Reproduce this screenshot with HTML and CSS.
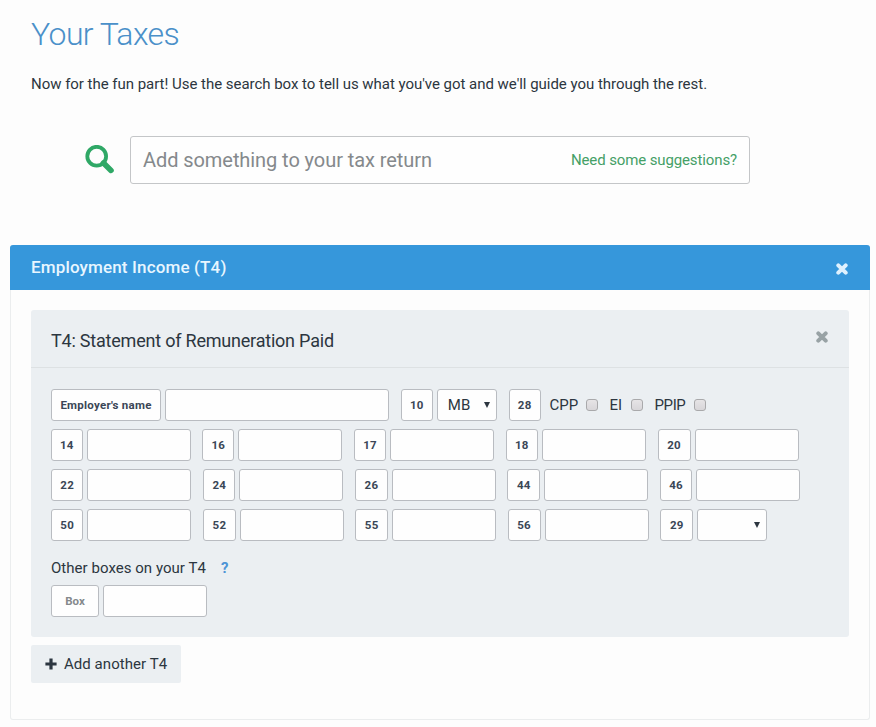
FILE: index.html
```
<!DOCTYPE html>
<html lang="en">
<head>
    <meta charset="UTF-8">
    <meta name="viewport" content="width=device-width, initial-scale=1.0">
    <title>Your Taxes</title>
    <link rel="stylesheet" href="styles.css">
</head>
<body>
    <header class="intro">
        <h1>Your Taxes</h1>
        <p>Now for the fun part! Use the search box to tell us what you've got and we'll guide you through the rest.</p>
    </header>

    <div class="search">
        <svg class="search-icon" viewBox="0 0 30 30" width="30" height="30">
            <circle cx="11.7" cy="11.2" r="9.4" fill="none" stroke="#2fa866" stroke-width="3.8"/>
            <path d="M18.5 18L26 25.4" fill="none" stroke="#2fa866" stroke-width="5.6" stroke-linecap="round"/>
        </svg>
        <div class="search-box">
            <input type="text" placeholder="Add something to your tax return">
            <a href="#">Need some suggestions?</a>
        </div>
    </div>

    <section class="panel">
        <div class="panel-header">
            <h2>Employment Income (T4)</h2>
            <button class="close" aria-label="Close">
                <svg viewBox="0 0 12 12" width="12" height="12"><path d="M2.3 2.3L9.7 9.7M9.7 2.3L2.3 9.7" stroke="currentColor" stroke-width="4" stroke-linecap="round"/></svg>
            </button>
        </div>
        <div class="panel-body">
            <div class="slip">
                <div class="slip-header">
                    <h3>T4: Statement of Remuneration Paid</h3>
                    <button class="close" aria-label="Remove">
                        <svg viewBox="0 0 12 12" width="12" height="12"><path d="M2.3 2.3L9.7 9.7M9.7 2.3L2.3 9.7" stroke="currentColor" stroke-width="4" stroke-linecap="round"/></svg>
                    </button>
                </div>
                <div class="slip-body">
                    <div class="row">
                        <div class="field"><label class="tag employer">Employer's name</label><input type="text" class="wide"></div>
                        <div class="field"><label class="tag">10</label><div class="select prov"><select><option>MB</option></select></div></div>
                        <div class="field"><label class="tag">28</label></div>
                        <div class="checks">
                            <label class="cpp">CPP <input type="checkbox"></label>
                            <label class="ei">EI <input type="checkbox"></label>
                            <label class="ppip">PPIP <input type="checkbox"></label>
                        </div>
                    </div>
                    <div class="row row-first">
                        <div class="field"><label class="tag">14</label><input type="text"></div>
                        <div class="field"><label class="tag">16</label><input type="text"></div>
                        <div class="field"><label class="tag">17</label><input type="text"></div>
                        <div class="field"><label class="tag">18</label><input type="text"></div>
                        <div class="field"><label class="tag">20</label><input type="text"></div>
                    </div>
                    <div class="row row-mid">
                        <div class="field"><label class="tag">22</label><input type="text"></div>
                        <div class="field"><label class="tag">24</label><input type="text"></div>
                        <div class="field"><label class="tag">26</label><input type="text"></div>
                        <div class="field"><label class="tag">44</label><input type="text"></div>
                        <div class="field"><label class="tag">46</label><input type="text"></div>
                    </div>
                    <div class="row row-last">
                        <div class="field"><label class="tag">50</label><input type="text"></div>
                        <div class="field"><label class="tag">52</label><input type="text"></div>
                        <div class="field"><label class="tag">55</label><input type="text"></div>
                        <div class="field"><label class="tag">56</label><input type="text"></div>
                        <div class="field"><label class="tag">29</label><div class="select code"><select><option></option></select></div></div>
                    </div>
                    <div class="other">Other boxes on your T4 <a href="#">?</a></div>
                    <div class="field"><input type="text" class="box-number" placeholder="Box"><input type="text"></div>
                </div>
            </div>
            <button class="add">
                <svg viewBox="0 0 12 12" width="12" height="12"><path d="M6 0.4V11.6M0.4 6H11.6" stroke="currentColor" stroke-width="3.2"/></svg>
                Add another T4
            </button>
        </div>
    </section>
</body>
</html>
```
FILE: styles.css
```
* {
    box-sizing: border-box;
}
body {
    margin: 0;
    background: #fdfdfd;
    color: #2c3640;
    font-family: Roboto, "Liberation Sans", sans-serif;
    font-size: 15px;
}
h1, h2, h3, p {
    margin: 0;
    font-weight: 400;
}
a {
    text-decoration: none;
}
button, input, select {
    font-family: inherit;
    color: inherit;
}
.intro {
    padding: 14px 31px 0;
}
.intro h1 {
    font-size: 32px;
    line-height: 40px;
    font-weight: 300;
    letter-spacing: -0.6px;
    color: #4a90c9;
}
.intro p {
    margin-top: 20px;
    line-height: 20px;
    letter-spacing: -0.03px;
}
.search {
    display: flex;
    align-items: center;
    gap: 15px;
    margin: 42px 0 0 85px;
}
.search-icon {
    display: block;
}
.search-box {
    display: flex;
    align-items: center;
    width: 620px;
    height: 48px;
    padding: 0 12px;
    background: #fefefe;
    border: 1px solid #c4c6c8;
    border-radius: 3px;
}
.search-box input {
    flex: 1;
    min-width: 0;
    border: none;
    padding: 0;
    background: none;
    font-size: 20px;
    letter-spacing: -0.07px;
}
.search-box input::placeholder {
    color: #85898c;
}
.search-box a {
    color: #45a067;
    letter-spacing: -0.12px;
}
.panel {
    width: 860px;
    height: 475px;
    margin: 61px 0 0 10px;
    border: 1px solid #ebedee;
    border-top: none;
    border-radius: 3px;
}
.panel-header {
    display: flex;
    align-items: center;
    justify-content: space-between;
    height: 45px;
    margin: 0 -1px;
    padding: 0 22px 0 21px;
    background: #3697db;
    color: #e8f6ff;
    border-radius: 3px 3px 0 0;
}
.panel-header h2 {
    margin-bottom: 2px;
    font-size: 17px;
    font-weight: 500;
    letter-spacing: 0.15px;
}
.close {
    display: block;
    padding: 0;
    border: none;
    background: none;
    color: #dff1fe;
    line-height: 0;
}
.panel-header .close {
    margin-top: 2px;
}
.panel-body {
    padding: 20px;
}
.slip {
    height: 327px;
    background: #ebeff2;
    border-radius: 3px;
}
.slip-header {
    display: flex;
    align-items: center;
    justify-content: space-between;
    height: 58px;
    padding: 3px 21px 0 20px;
    border-bottom: 1px solid #dde1e3;
}
.slip-header h3 {
    font-size: 18px;
    letter-spacing: -0.21px;
}
.slip-header .close {
    margin-bottom: 6px;
    color: #98a2a5;
}
.slip-body {
    padding: 21px 0 0 20px;
}
.row {
    display: flex;
    gap: 11.85px;
    margin-bottom: 8px;
}
.field {
    display: flex;
    gap: 4px;
}
.tag {
    display: flex;
    align-items: center;
    justify-content: center;
    width: 32px;
    height: 32px;
    background: #fefefe;
    border: 1px solid #b9bcc1;
    border-radius: 3px;
    color: #3a4656;
    font-size: 11.5px;
    font-weight: 700;
    letter-spacing: 0.25px;
}
.row-first .tag {
    width: 31.9px;
}
.row-first .field:first-child .tag {
    width: 31.5px;
}
.row-first .field:last-child .tag {
    width: 33px;
}
.row-mid .tag {
    width: 32.3px;
}
.row-mid .field:nth-child(4) .tag {
    width: 32.7px;
}
.row-last .tag {
    width: 32.4px;
}
.row-last .field:nth-child(4) .tag,
.row-last .field:nth-child(5) .tag {
    width: 32.8px;
}
.row .employer {
    width: 110px;
}
.field input, .select select {
    width: 104px;
    height: 32px;
    padding: 0 10px;
    background: #fefefe;
    border: 1px solid #b9bcc1;
    border-radius: 3px;
    font-size: 15px;
}
.field .wide {
    width: 224px;
}
.select {
    position: relative;
}
.select select {
    appearance: none;
    width: 100%;
}
.select::after {
    content: "";
    position: absolute;
    top: 13px;
    right: 7px;
    border: 3px solid transparent;
    border-top: 6px solid #2c3640;
    border-bottom: none;
}
.prov {
    width: 60px;
}
.code {
    width: 70px;
}
.checks {
    display: flex;
    align-items: center;
    margin-left: -3px;
}
.checks label {
    display: flex;
    align-items: center;
    justify-content: space-between;
}
.checks .cpp {
    width: 48px;
    margin-right: 12px;
}
.checks .ei {
    width: 33px;
    margin-right: 12px;
}
.checks .ppip {
    width: 51px;
    letter-spacing: -0.4px;
}
.checks input {
    appearance: none;
    width: 12px;
    height: 12px;
    margin: 0;
    background: linear-gradient(#e6e4e6, #d8d6d9);
    border: 1px solid #a9a9ab;
    border-radius: 3px;
}
.other {
    display: flex;
    gap: 15px;
    margin: 17px 0 7px;
    line-height: 20px;
    letter-spacing: 0.04px;
}
.other a {
    color: #4d94d6;
    font-weight: 700;
}
.field .box-number {
    width: 48px;
    padding: 0;
    text-align: center;
    font-size: 11.5px;
    font-weight: 700;
}
.box-number::placeholder {
    color: #85898c;
}
.add {
    display: flex;
    align-items: center;
    gap: 7px;
    width: 150px;
    height: 38px;
    margin-top: 8px;
    padding: 0 0 0 14px;
    background: #ebeff2;
    border: none;
    border-radius: 2px;
    font-size: 15px;
    letter-spacing: 0.05px;
}
```
